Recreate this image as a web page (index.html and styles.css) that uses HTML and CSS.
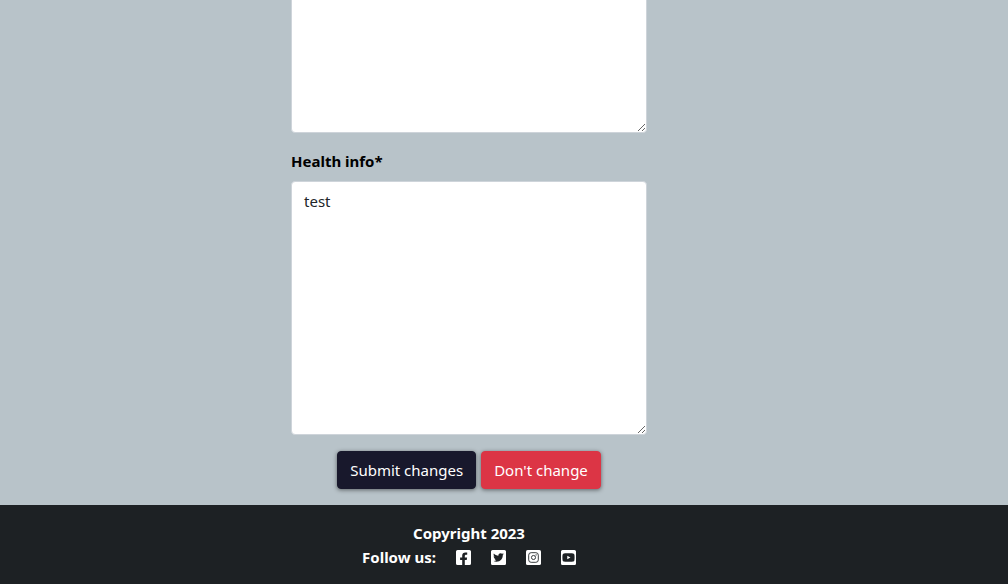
FILE: index.html
```html
<!DOCTYPE html>
<html lang="en">
<head>
<meta charset="utf-8">
<meta name="viewport" content="width=device-width, initial-scale=1">
<title>Edit info</title>
<link rel="stylesheet" href="styles.css">
</head>
<body>
<main class="main">
  <form class="form">
    <textarea class="field" aria-label="Description"></textarea>
    <label class="label" for="health">Health info*</label>
    <textarea class="field" id="health">test</textarea>
    <div class="actions">
      <button class="btn btn-submit" type="submit">Submit changes</button>
      <button class="btn btn-cancel" type="button">Don't change</button>
    </div>
  </form>
</main>
<footer class="footer">
  <div>Copyright 2023</div>
  <div class="follow">
    <span>Follow us:</span>
    <a class="social" href="#" aria-label="Facebook"><svg class="icon" viewBox="0 32 448 448"><path d="M400 32H48A48 48 0 0 0 0 80v352a48 48 0 0 0 48 48h137.25V327.69h-63V256h63v-54.64c0-62.15 37-96.48 93.67-96.48 27.14 0 55.52 4.84 55.52 4.84v61h-31.27c-30.81 0-40.42 19.12-40.42 38.73V256h68.78l-11 71.69h-57.78V480H400a48 48 0 0 0 48-48V80a48 48 0 0 0-48-48z"/></svg></a>
    <a class="social" href="#" aria-label="Twitter"><svg class="icon" viewBox="0 32 448 448"><path d="M400 32H48C21.500 32 0 53.500 0 80v352c0 26.500 21.500 48 48 48h352c26.500 0 48-21.500 48-48V80c0-26.500-21.500-48-48-48zm-48.900 158.800c.2 2.800.2 5.700.2 8.500 0 86.700-66 186.600-186.600 186.600-37.200 0-71.700-10.800-100.700-29.400 5.300.6 10.400.8 15.800.8 30.700 0 58.900-10.400 81.400-28-28.800-.6-53-19.500-61.300-45.500 10.100 1.500 19.200 1.500 29.600-1.200-30-6.100-52.500-32.500-52.500-64.400v-.8c8.700 4.900 18.900 7.900 29.600 8.300a65.447 65.447 0 0 1-29.200-54.600c0-12.200 3.200-23.400 8.900-33.100 32.300 39.800 80.800 65.800 135.200 68.600-9.300-44.500 24-80.600 64-80.600 18.900 0 35.900 7.900 47.900 20.700 14.800-2.800 29-8.300 41.600-15.800-4.900 15.200-15.200 28-28.800 36.100 13.200-1.400 26-5.100 37.800-10.200-8.900 13.100-20.100 24.700-32.900 34z"/></svg></a>
    <a class="social" href="#" aria-label="Instagram"><svg class="icon" viewBox="0 0 448 448"><rect width="448" height="448" rx="48"/><g class="cut"><rect x="80" y="80" width="288" height="288" rx="74"/><circle cx="224" cy="224" r="61"/></g><circle class="dot" cx="301" cy="147" r="17"/></svg></a>
    <a class="social" href="#" aria-label="YouTube"><svg class="icon" viewBox="0 32 448 448"><path d="M186.800 202.100l95.200 54.100-95.200 54.100V202.100zM448 80v352c0 26.500-21.500 48-48 48H48c-26.500 0-48-21.500-48-48V80c0-26.500 21.500-48 48-48h352c26.500 0 48 21.500 48 48zm-42 176.300s0-59.600-7.600-88.200c-4.200-15.800-16.500-28.200-32.200-32.400C337.900 128 224 128 224 128s-113.900 0-142.200 7.700c-15.700 4.200-28 16.600-32.200 32.400-7.600 28.500-7.600 88.200-7.600 88.200s0 59.600 7.600 88.200c4.200 15.800 16.500 27.700 32.200 31.900C110.100 384 224 384 224 384s113.900 0 142.200-7.700c15.700-4.200 28-16.100 32.200-31.900 7.600-28.500 7.600-88.100 7.600-88.100z"/></svg></a>
  </div>
</footer>
</body>
</html>
```
FILE: styles.css
```css
* {
  box-sizing: border-box;
}

body {
  margin: 0;
  height: 100vh;
  display: flex;
  flex-direction: column;
  background: #b8c3c9;
  color: #000;
  font: 15px/24px "Segoe UI", "Noto Sans", sans-serif;
}

.main {
  flex: 1;
  min-height: 0;
  overflow: hidden;
  display: flex;
  flex-direction: column;
  align-items: center;
  justify-content: flex-end;
  padding: 0 70px 16px 0;
}

.form {
  flex: none;
  display: flex;
  flex-direction: column;
  width: 100%;
  max-width: 356px;
}

.field {
  display: block;
  width: 100%;
  height: 254px;
  margin: 0 0 16px;
  padding: 7px 12px;
  border: 1px solid #ced4da;
  border-radius: 4px;
  background: #fff;
  color: #212529;
  font: inherit;
  resize: vertical;
}

.label {
  margin-bottom: 8px;
  font-weight: 700;
}

.actions {
  display: flex;
  justify-content: center;
  gap: 5px;
}

.btn {
  padding: 6px 12px;
  border: 1px solid;
  border-radius: 4px;
  color: #fff;
  font: inherit;
  white-space: nowrap;
  box-shadow: 0 1px 4px rgba(0, 0, 0, 0.5);
}

.btn-submit {
  background: #18182c;
  border-color: #18182c;
}

.btn-cancel {
  background: #dc3545;
  border-color: #dc3545;
}

.footer {
  padding: 16px 70px 15px 0;
  background: #1d2124;
  color: #fff;
  font-weight: 700;
  text-align: center;
}

.follow {
  display: flex;
  justify-content: center;
  align-items: center;
  gap: 20px;
}

.social {
  display: flex;
}

.icon {
  width: 15px;
  height: 15px;
  fill: #fff;
}

.cut {
  fill: none;
  stroke: #1d2124;
  stroke-width: 26;
}

.dot {
  fill: #1d2124;
}
```
